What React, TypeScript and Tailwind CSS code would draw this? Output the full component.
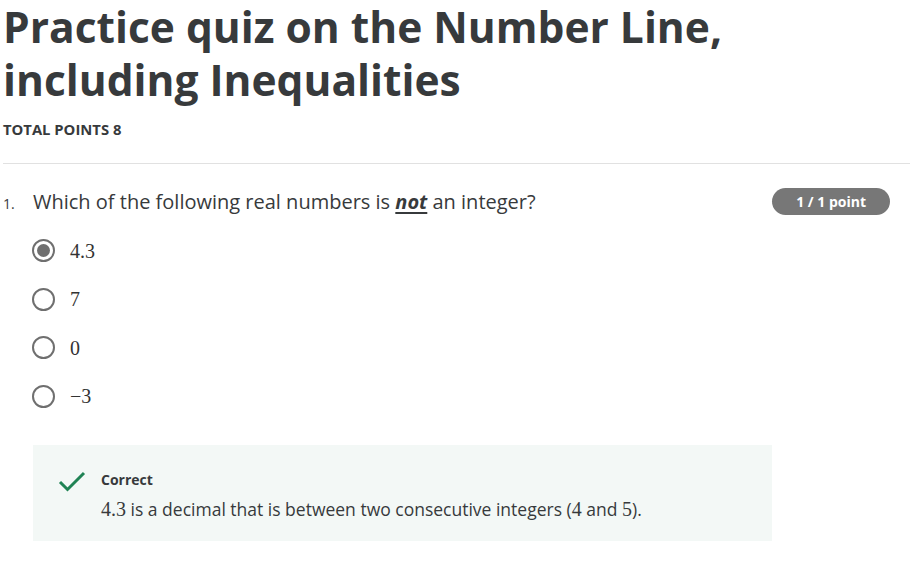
const options = ["4.3", "7", "0", "\u22123"];

function Radio({ checked }: { checked: boolean }) {
  return (
    <span className="flex h-[23px] w-[23px] items-center justify-center rounded-full border-[2.5px] border-[#6f6f6f]">
      {checked && <span className="h-[13px] w-[13px] rounded-full bg-[#6f6f6f]" />}
    </span>
  );
}

export default function App() {
  return (
    <div className="min-h-[572px] w-[923px] bg-white font-['Open_Sans',sans-serif] text-[#373a3c]">
      <div className="pl-[3px] pr-[13px]">
        <h1 className="text-[42.5px] font-bold leading-[53px]">
          Practice quiz on the Number Line,
          <br />
          including Inequalities
        </h1>
        <div className="mt-[12px] text-[14.8px] font-bold text-[#373a3c]">TOTAL POINTS 8</div>
        <hr className="mt-[23px] border-t border-[#e1e1e1]" />

        <div className="mt-[23px] flex items-start justify-between">
          <div className="flex items-baseline">
            <span className="w-[30px] text-[14px]">1.</span>
            <span className="text-[20px] text-[#373a3c]">
              Which of the following real numbers is{" "}
              <span className="font-bold italic underline underline-offset-[3px]">not</span> an integer?
            </span>
          </div>
          <span className="mr-[20px] mt-[1px] rounded-full bg-[#777777] px-[24px] py-[3px] text-[14px] font-bold text-white">
            1 / 1 point
          </span>
        </div>

        <div className="ml-[29px] mt-[22px] flex flex-col gap-[25.5px]">
          {options.map((o, i) => (
            <label key={o} className="flex h-[23px] items-center gap-[15px]">
              <Radio checked={i === 0} />
              <span className="font-['Liberation_Serif',serif] text-[20px] text-[#333]">{o}</span>
            </label>
          ))}
        </div>

        <div className="ml-[30px] mt-[37px] w-[739px] bg-[#f3f8f6] pb-[17px] pl-[24px] pt-[24px]">
          <div className="flex items-start gap-[14px]">
            <svg width="30" height="24" viewBox="0 0 30 24" className="mt-[1px]">
              <path d="M3 12 L10.5 19.5 L27 3" fill="none" stroke="#1f8354" strokeWidth="3" />
            </svg>
            <div>
              <div className="text-[14px] font-bold text-[#373a3c]">Correct</div>
              <div className="mt-[4px] text-[17.5px] text-[#373a3c]">
                <span className="font-['Liberation_Serif',serif] text-[20px]">4.3</span> is a decimal that is between two
                consecutive integers (<span className="font-['Liberation_Serif',serif] text-[20px]">4</span> and{" "}
                <span className="font-['Liberation_Serif',serif] text-[20px]">5</span>).
              </div>
            </div>
          </div>
        </div>
      </div>
    </div>
  );
}
